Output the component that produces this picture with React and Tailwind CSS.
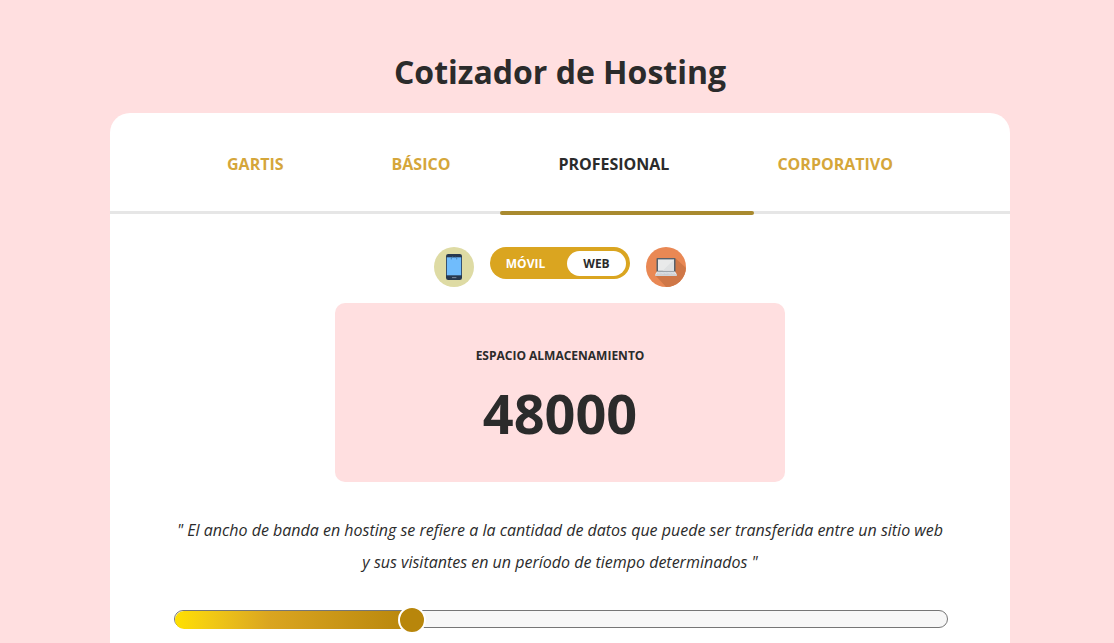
import { useState } from "react";

const TABS = ["GARTIS", "BÁSICO", "PROFESIONAL", "CORPORATIVO"];
const MAX = 160000;

function PhoneIcon() {
  return (
    <svg className="size-10 shrink-0" viewBox="0 0 40 40" aria-hidden="true">
      <circle cx="20" cy="20" r="20" fill="#dedba4" />
      <rect x="12" y="7" width="16" height="26" rx="2.2" fill="#27384f" />
      <rect x="12.8" y="10.3" width="14.4" height="18" fill="#70bcfc" />
      <path d="M17.3 12.4V11a1.3 1.3 0 0 1 2.4-.3M20.5 10.7a1.3 1.3 0 0 1 2.2.5v1.2" fill="none" stroke="#3f78ac" strokeWidth="0.9" />
      <path d="M18 30.6h4.4" stroke="#8190a2" strokeWidth="0.9" />
    </svg>
  );
}

function LaptopIcon() {
  return (
    <svg className="size-10 shrink-0" viewBox="0 0 40 40" aria-hidden="true">
      <defs>
        <clipPath id="disc"><circle cx="20" cy="20" r="20" /></clipPath>
      </defs>
      <g clipPath="url(#disc)">
        <rect width="40" height="40" fill="#e98854" />
        <path d="M29.5 11.3L41 22v19H21L9.5 28.5Z" fill="#cf7747" />
      </g>
      <rect x="10.5" y="11" width="19" height="14" rx="0.9" fill="#56616b" />
      <rect x="12" y="12.4" width="16" height="11.4" fill="#e9eaea" />
      <path d="M28 12.4V23.8H16.7Z" fill="#dfe1e2" />
      <path d="M11 24.6h18l2 3.2H9Z" fill="#e5e9ed" />
      <path d="M11.5 25.7h17M11 26.6h18" stroke="#b3bac1" strokeWidth="0.45" strokeDasharray="1 0.4" />
      <path d="M9 27.6h22v.7q0 .7-.8.7H9.8q-.8 0-.8-.7Z" fill="#cdd4da" />
      <path d="M17.8 27h4.4v.8h-4.4Z" fill="#c7cdd3" />
    </svg>
  );
}

export default function App() {
  const [tab, setTab] = useState("PROFESIONAL");
  const [mode, setMode] = useState("web");
  const [space, setSpace] = useState(48000);
  const ratio = space / MAX;

  return (
    <div className="flex min-h-screen flex-col items-center bg-[#ffdfe0] pt-12 pl-[6px] font-['Open_Sans',sans-serif] text-[#2b2b2b]">
      <h1 className="mb-[18px] text-[32px] leading-[47px] font-bold">Cotizador de Hosting</h1>

      <main className="flex w-full max-w-[900px] grow flex-col rounded-t-[20px] bg-white">
        <nav className="relative flex justify-center border-b-3 border-[#e6e6e6] pt-[26px] pb-[22px]">
          {TABS.map((name) => (
            <button
              key={name}
              type="button"
              aria-pressed={tab === name}
              onClick={() => setTab(name)}
              className={
                "cursor-pointer px-[54px] text-[16px] leading-[50px] font-bold " +
                (tab === name ? "text-[#2b2b2b]" : "text-[#d5a63a]")
              }
            >
              {name}
            </button>
          ))}
          <span className="absolute top-full left-[390px] h-1 w-[254px] rounded-[2px] bg-[#a98a2f]" />
        </nav>

        <section className="flex flex-col items-center px-16 pt-[33px] pb-8">
          <div className="flex items-start justify-center gap-4">
            <PhoneIcon />
            <div className="flex h-8 w-[140px] items-center rounded-full bg-[#daa520] pt-1 pr-1 pb-[3px] pl-1 text-[12px] font-bold">
              {[["movil", "MÓVIL"], ["web", "WEB"]].map(([id, label]) => (
                <button
                  key={id}
                  type="button"
                  aria-pressed={mode === id}
                  onClick={() => setMode(id)}
                  className={
                    "h-full cursor-pointer rounded-full " +
                    (id === "web" ? "w-[59px] " : "grow pr-[10px] ") +
                    (mode === id ? "bg-white text-[#2b2b2b]" : "text-white")
                  }
                >
                  {label}
                </button>
              ))}
            </div>
            <LaptopIcon />
          </div>

          <div className="mt-4 flex w-full max-w-[450px] flex-col items-center rounded-[10px] bg-[#ffdfe0] px-6 pt-10 pb-8">
            <label htmlFor="space" className="text-[12px] leading-[26px] font-bold">ESPACIO ALMACENAMIENTO</label>
            <output htmlFor="space" className="mt-2 text-[54px] leading-[73px] font-bold">{space}</output>
          </div>

          <p className="my-8 text-center text-[16px] leading-8 italic">
            " El ancho de banda en hosting se refiere a la cantidad de datos que puede ser transferida entre un sitio web
            y sus visitantes en un período de tiempo determinados "
          </p>

          <div className="relative h-[18px] w-[calc(100%+2px)] self-start rounded-full border border-[#767676] bg-[#f7f7f7]">
            <span
              className="absolute top-0 left-0 h-[18px] rounded-l-full bg-linear-to-r from-[#ffe000] via-[#daa520] via-40% to-[#b8860b]"
              style={{ width: `calc(14px + (100% - 28px) * ${ratio})` }}
            />
            <input
              id="space"
              type="range"
              min="0"
              max={MAX}
              step="1000"
              value={space}
              onChange={(e) => setSpace(Number(e.target.value))}
              className="absolute inset-0 h-[18px] w-full cursor-pointer appearance-none bg-transparent [&::-webkit-slider-thumb]:size-7 [&::-webkit-slider-thumb]:appearance-none [&::-webkit-slider-thumb]:rounded-full [&::-webkit-slider-thumb]:border-2 [&::-webkit-slider-thumb]:border-solid [&::-webkit-slider-thumb]:border-white [&::-webkit-slider-thumb]:bg-[#b8860b]"
            />
          </div>
        </section>
      </main>
    </div>
  );
}
